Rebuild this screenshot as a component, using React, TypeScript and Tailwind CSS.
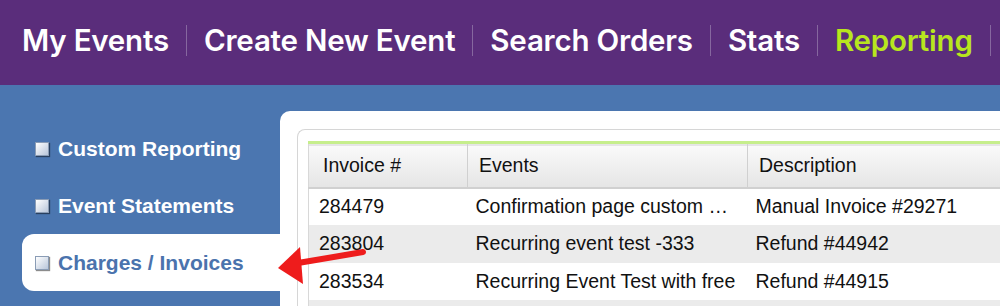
import React from "react";

const navItems = [
  { label: "My Events" },
  { label: "Create New Event" },
  { label: "Search Orders" },
  { label: "Stats" },
  { label: "Reporting", active: true },
];

const sideItems = [
  { label: "Custom Reporting" },
  { label: "Event Statements" },
  { label: "Charges / Invoices", active: true },
];

const rows = [
  { id: "284479", event: "Confirmation page custom …", desc: "Manual Invoice #29271" },
  { id: "283804", event: "Recurring event test -333", desc: "Refund #44942" },
  { id: "283534", event: "Recurring Event Test with free", desc: "Refund #44915" },
  { id: "", event: "", desc: "" },
];

function Bullet() {
  return (
    <span className="inline-block h-[14px] w-[14px] shrink-0 border border-[#8a9cb5] bg-gradient-to-br from-white to-[#b9c6da] shadow-[1px_1px_1px_rgba(0,0,0,0.45)]" />
  );
}

function Arrow() {
  return (
    <svg className="absolute left-[270px] top-[240px]" width="100" height="60" viewBox="0 0 100 60">
      <path d="M93 12 L28 23" stroke="#ee1c1c" strokeWidth="6" strokeLinecap="round" />
      <path d="M8 28 L30 7 L33 44 Z" fill="#ee1c1c" />
    </svg>
  );
}

export default function App() {
  return (
    <div className="relative h-[306px] w-[1000px] overflow-hidden bg-[#4b76b0]">
      <header className="flex h-[85px] items-center bg-[#5a2d7b] pb-[4px] pl-[5px]">
        {navItems.map((item) => (
          <div className="flex items-center" key={item.label}>
            <span
              className={`whitespace-nowrap px-[17px] font-['Inter',sans-serif] text-[29.5px] font-semibold tracking-[-0.2px] ${
                item.active ? "text-[#b8e61e]" : "text-white"
              }`}
            >
              {item.label}
            </span>
            <span className="h-[31px] w-px shrink-0 bg-[#86679f]" />
          </div>
        ))}
      </header>

      <div className="flex">
        <ul className="w-[280px] shrink-0 pl-[22px] pt-[35px] font-['Liberation_Sans',Arial,sans-serif] text-[21px] font-bold">
          {sideItems.map((item) => (
            <li
              className={`flex h-[57px] items-center gap-[9px] pl-[13px] ${
                item.active ? "rounded-l-[12px] bg-white text-[#4a73ad]" : "text-white"
              }`}
              key={item.label}
            >
              <Bullet />
              {item.label}
            </li>
          ))}
        </ul>

        <div className="mt-[26px] h-[300px] flex-1 rounded-tl-[10px] bg-white pl-[17px] pt-[18px]">
          <div className="h-[300px] rounded-tl-[8px] border-l border-t border-[#d6d6d6] pl-[10px] pt-[11px]">
            <table className="w-[700px] table-fixed border-collapse border-l border-[#d8d8d8] font-['Liberation_Sans',Arial,sans-serif] text-[19.5px] text-[#111]">
              <colgroup>
                <col className="w-[159px]" />
                <col className="w-[280px]" />
                <col className="w-[261px]" />
              </colgroup>
              <thead>
                <tr className="h-[45px] border-t-[3px] border-[#c6ee8c] bg-gradient-to-b from-[#fafafa] to-[#e5e5e5]">
                  <th className="border-b-2 border-r border-[#d0d0d0] pl-[14px] text-left font-normal">Invoice #</th>
                  <th className="border-b-2 border-r border-[#d0d0d0] pl-[11px] text-left font-normal">Events</th>
                  <th className="border-b-2 border-r border-[#d0d0d0] pl-[11px] text-left font-normal">Description</th>
                </tr>
              </thead>
              <tbody>
                {rows.map((r, i) => (
                  <tr className={`h-[37.5px] ${i % 2 ? "bg-[#ebebeb]" : "bg-white"}`} key={i}>
                    <td className="whitespace-nowrap pl-[10px]">{r.id}</td>
                    <td className="whitespace-nowrap pl-[8px]">{r.event}</td>
                    <td className="whitespace-nowrap pl-[8px]">{r.desc}</td>
                  </tr>
                ))}
              </tbody>
            </table>
          </div>
        </div>
      </div>

      <Arrow />
    </div>
  );
}
